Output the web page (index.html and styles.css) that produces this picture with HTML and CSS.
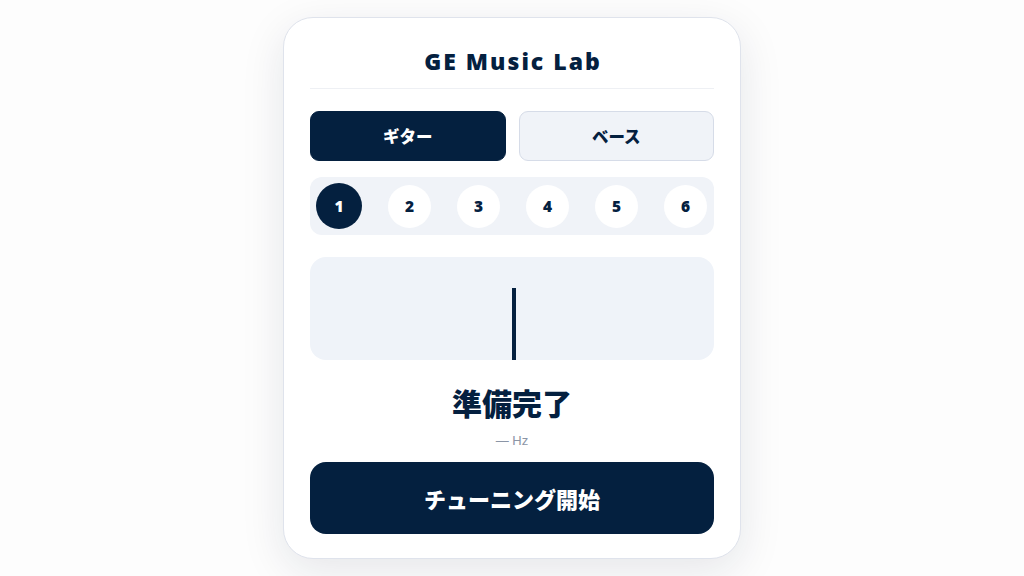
FILE: index.html
```html
<!DOCTYPE html>
<html lang="ja">
<head>
<meta charset="utf-8">
<title>GE Music Lab</title>
<link rel="stylesheet" href="styles.css">
</head>
<body>
<main class="tuner">
  <h1 class="tuner-title">GE Music Lab</h1>
  <div class="mode-tabs">
    <button class="mode-tab is-active">ギター</button>
    <button class="mode-tab">ベース</button>
  </div>
  <div class="string-row">
    <button class="string-btn is-active">1</button>
    <button class="string-btn">2</button>
    <button class="string-btn">3</button>
    <button class="string-btn">4</button>
    <button class="string-btn">5</button>
    <button class="string-btn">6</button>
  </div>
  <div class="meter">
    <div class="needle"></div>
  </div>
  <p class="status">準備完了</p>
  <p class="freq">— Hz</p>
  <button class="start-btn">チューニング開始</button>
</main>
</body>
</html>
```
FILE: styles.css
```css
* { box-sizing: border-box; }

html, body {
  margin: 0;
  height: 100%;
}

body {
  background: #fdfdfd;
  font-family: "Open Sans", "Noto Sans CJK JP", sans-serif;
  color: #04203f;
  display: flex;
  align-items: center;
  justify-content: center;
}

.tuner {
  width: 458px;
  height: 542px;
  background: #fff;
  border: 1px solid #dfe3ec;
  border-radius: 30px;
  box-shadow: 0 12px 44px rgba(20, 30, 60, 0.10);
  padding: 28px 26px 24px;
  display: flex;
  flex-direction: column;
}

.tuner-title {
  margin: 0;
  font-family: "Open Sans", sans-serif;
  font-size: 23px;
  line-height: 30px;
  font-weight: 800;
  letter-spacing: 2px;
  text-indent: 2px;
  text-align: center;
  padding-bottom: 12px;
  border-bottom: 1px solid #eef0f4;
}

.mode-tabs {
  margin-top: 22px;
  display: flex;
  gap: 13px;
}

.mode-tab {
  flex: 1;
  height: 50px;
  border-radius: 9px;
  border: 1px solid #d6dce8;
  background: #f0f3f8;
  color: #04203f;
  font-family: "Noto Sans CJK JP", sans-serif;
  font-weight: 900;
  font-size: 16.5px;
}

.mode-tab.is-active {
  background: #04203f;
  border-color: #04203f;
  color: #fff;
}

.string-row {
  margin-top: 16px;
  height: 58px;
  background: #f0f3f8;
  border-radius: 12px;
  padding: 0 7px 0 6px;
  display: flex;
  align-items: center;
  justify-content: space-between;
}

.string-btn {
  width: 43px;
  height: 43px;
  border-radius: 50%;
  border: none;
  background: #fff;
  color: #04203f;
  font-family: "Open Sans", sans-serif;
  font-weight: 800;
  font-size: 15.5px;
  padding: 0;
}

.string-btn.is-active {
  width: 46px;
  height: 46px;
  background: #04203f;
  color: #fff;
}

.meter {
  margin-top: 22px;
  height: 103px;
  background: #eff3f9;
  border-radius: 16px;
  display: flex;
  justify-content: center;
  align-items: flex-end;
}

.needle {
  width: 4px;
  height: 72px;
  background: #04203f;
  margin-left: 4px;
}

.status {
  margin: 23px 0 0;
  font-family: "Noto Sans CJK JP", sans-serif;
  font-weight: 900;
  font-size: 30px;
  line-height: 38px;
  text-align: center;
}

.freq {
  margin: 11px 0 0;
  font-family: "Liberation Sans", sans-serif;
  font-size: 13px;
  line-height: 18px;
  color: #8b95a6;
  text-align: center;
}

.start-btn {
  margin-top: 12px;
  height: 72px;
  border: none;
  border-radius: 16px;
  background: #04203f;
  color: #fff;
  font-family: "Noto Sans CJK JP", sans-serif;
  font-weight: 900;
  font-size: 22px;
}
```
